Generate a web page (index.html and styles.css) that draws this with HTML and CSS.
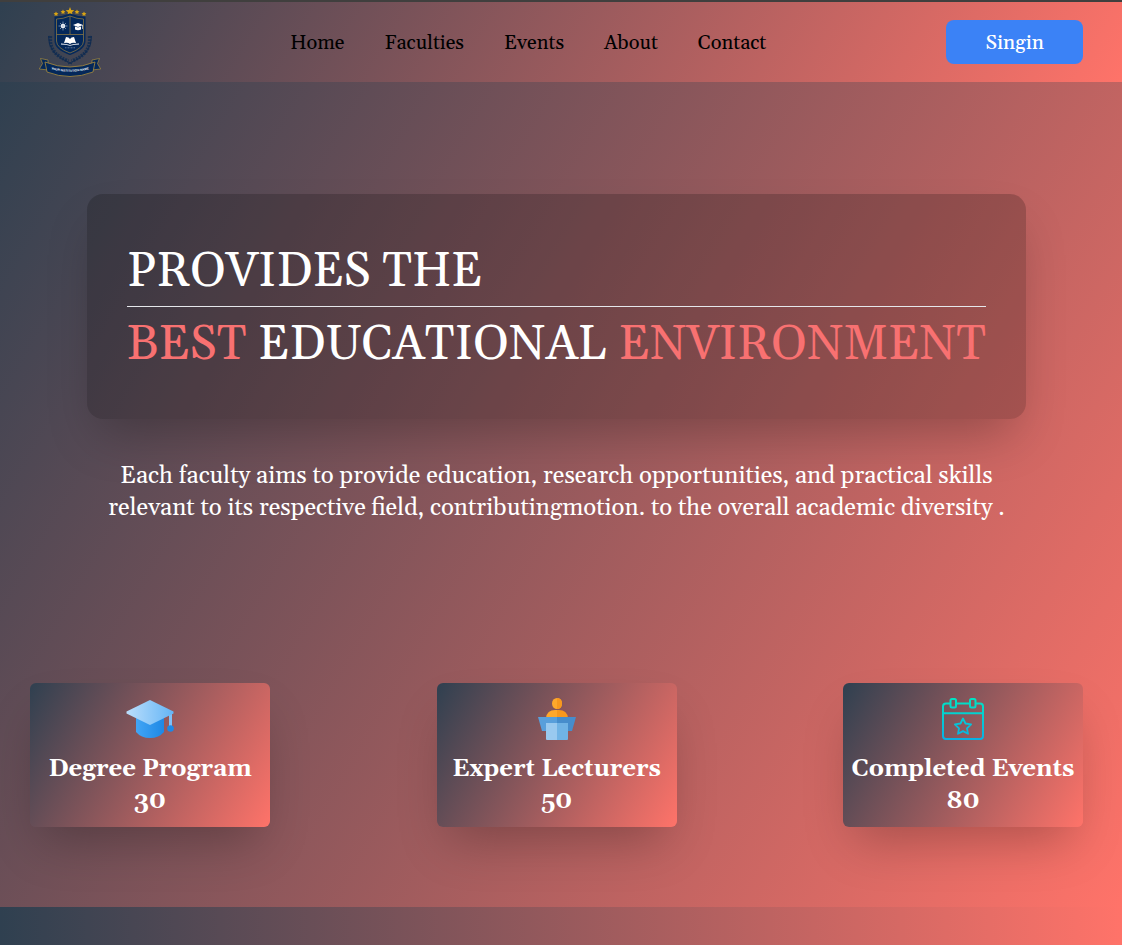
FILE: index.html
```html
<!DOCTYPE html>
<html lang="en">
<head>
<meta charset="utf-8">
<meta name="viewport" content="width=device-width, initial-scale=1">
<title>Best Educational Environment</title>
<link rel="stylesheet" href="styles.css">
</head>
<body>
<header class="site-header">
  <a class="logo" href="#" aria-label="Institution home">
    <svg viewBox="0 0 70 75" width="70" height="75" aria-hidden="true">
      <g fill="#d9a514">
        <path d="M35 2l1.200 2.900 3.100.3-2.300 2.100.6 3-2.600-1.500-2.600 1.500.6-3-2.300-2.100 3.100-.3z"/>
        <path d="M28 4.500l.8 1.500 1.600.2-1.200 1.200.3 1.600-1.500-.8-1.500.8.3-1.600-1.200-1.200 1.600-.2z"/>
        <path d="M42 4.500l.8 1.500 1.600.2-1.200 1.200.3 1.600-1.500-.8-1.500.8.3-1.600-1.200-1.200 1.600-.2z"/>
        <path d="M21 6.500l.8 1.500 1.600.2-1.200 1.200.3 1.600-1.500-.8-1.500.8.3-1.600-1.200-1.200 1.600-.2z"/>
        <path d="M49 6.500l.8 1.500 1.600.2-1.200 1.200.3 1.600-1.500-.8-1.500.8.3-1.600-1.200-1.200 1.600-.2z"/>
      </g>
      <path d="M15.500 31q-2 18 18 25M54.500 31q2 18-18 25" fill="none" stroke="#173052" stroke-width="3.500" stroke-dasharray="2 1"/>
      <path d="M13.500 31q-1 18 23.500 28M56.500 31q1 18-23.500 28" fill="none" stroke="#102b50" stroke-width="1"/>
      <path d="M35 9.500q7 3 14.500 3V36q0 8-14.500 13-14.500-5-14.500-13V12.500q7.500 0 14.500-3z" fill="#04285a" stroke="#04285a" stroke-width="2"/>
      <path d="M35 11q7 3 13.500 3v22q0 7-13.500 12-13.500-5-13.500-12V14q6.500 0 13.500-3zM35 11v18.500M21.500 29.500h27" fill="none" stroke="#857345" stroke-width=".8"/>
      <circle cx="28" cy="21" r="2.200" fill="#fff"/>
      <path d="M28 16.500v9M23.500 21h9M25 18l6 6M31 18l-6 6" stroke="#bdcbdc" stroke-width=".6"/>
      <path d="M38 20l5-2 5 2-5 2zM40 21.500v3q3 1.500 6 0v-3l-3 1zM47.300 20h.6v4h-.6z" fill="#fff"/>
      <path d="M31 32q3 0 4 2 1-2 4-2l2 6q-4-1-6 1-2-2-6-1zM26 38.500q5 0 9 1.500 4-1.500 9-1.500v1q-5 0-9 1.300-4-1.300-9-1.300z" fill="#fff"/>
      <path d="M30 42.800h10" stroke="#8396b2" stroke-width=".7" stroke-dasharray="1 .5"/>
      <path d="M13 55l-7.500-1.500 2 5-3.200 5.500 9 1zM57 55l7.500-1.500-2 5 3.200 5.500-9 1z" fill="#04285a" stroke="#a98c3c" stroke-width=".7"/>
      <path d="M10 57q25 10 50 0l-2 10q-23 9-46 0z" fill="#04285a" stroke="#a98c3c" stroke-width=".8"/>
      <path id="motto" d="M11 62.700q24 8 48 0" fill="none"/>
      <text class="motto"><textPath href="#motto" startOffset="50%" text-anchor="middle">YOUR INSTITUTION NAME</textPath></text>
    </svg>
  </a>
  <nav class="nav" aria-label="Main">
    <a href="#">Home</a><a href="#">Faculties</a><a href="#">Events</a><a href="#">About</a><a href="#">Contact</a>
  </nav>
  <button class="signin" type="button">Singin</button>
</header>
<main class="hero">
  <section class="intro">
    <h1 class="title">
      <span class="title-top">PROVIDES THE</span>
      <span class="title-bottom"><em>BEST</em> EDUCATIONAL <em>ENVIRONMENT</em></span>
    </h1>
    <p class="lead">Each faculty aims to provide education, research opportunities, and practical skills<br>relevant to its respective field, contributingmotion. to the overall academic diversity .</p>
  </section>
  <section class="stats" aria-label="Statistics">
    <article class="card">
      <svg viewBox="0 0 48 48" width="48" height="48" aria-hidden="true">
        <defs>
          <linearGradient id="cap"><stop stop-color="#bbdefb"/><stop offset="1" stop-color="#64b5f6"/></linearGradient>
          <linearGradient id="base"><stop stop-color="#42a5f5"/><stop offset="1" stop-color="#1e88e5"/></linearGradient>
        </defs>
        <path d="M10 20h28v17q-5 6-14 6t-14-6z" fill="url(#base)"/>
        <path d="M43 18h3v16h-3z" fill="#7fc0f7"/><circle cx="44.500" cy="33.500" r="3.300" fill="#1e88e5"/>
        <path d="M24 5l23.500 11.500v2L24 30 .5 18.500v-2z" fill="url(#cap)"/>
      </svg>
      <h2>Degree Program</h2><p>30</p>
    </article>
    <article class="card">
      <svg viewBox="0 0 48 48" width="48" height="48" aria-hidden="true">
        <ellipse cx="24" cy="8.500" rx="5" ry="5.500" fill="#ffa82b"/><path d="M24 3q5 0 5 5.500T24 14z" fill="#f8981d"/>
        <path d="M13 23q1-8 9-8h2v8z" fill="#ffa82b"/><path d="M24 15h2q8 0 9 8H24z" fill="#f8981d"/>
        <path d="M5 22h19v14H9z" fill="#589fdb"/><path d="M24 22h19l-4 14H24z" fill="#468dcc"/>
        <path d="M13 28h11v17H14q-1 0-1-1z" fill="#99c9ef"/><path d="M24 28h11v16q0 1-1 1H24z" fill="#70b3e5"/>
      </svg>
      <h2>Expert Lecturers</h2><p>50</p>
    </article>
    <article class="card">
      <svg viewBox="0 0 48 48" width="48" height="48" aria-hidden="true">
        <defs><linearGradient id="event" gradientUnits="userSpaceOnUse" x1="24" y1="3" x2="24" y2="45"><stop stop-color="#00e5c3"/><stop offset="1" stop-color="#08b0e6"/></linearGradient></defs>
        <g fill="none" stroke="url(#event)" stroke-width="2" stroke-linejoin="round">
          <path d="M11 8.500H7q-3 0-3 3V41q0 3 3 3h34q3 0 3-3V11.500q0-3-3-3h-4M17 8.500h14M4 18.300h40"/>
          <rect x="11.500" y="4" width="5.500" height="8.500" rx="1.500"/><rect x="31" y="4" width="5.500" height="8.500" rx="1.500"/>
          <path d="M24 23.500l2.500 5 5.600.8-4.100 4 1 5.500-5-2.700-5 2.700 1-5.500-4.100-4 5.600-.8z" stroke-width="1.800"/>
        </g>
      </svg>
      <h2>Completed Events</h2><p>80</p>
    </article>
  </section>
</main>
<section class="next-section" aria-hidden="true"></section>
</body>
</html>
```
FILE: styles.css
```css
* { box-sizing: border-box; }

:root {
  --blend-from: #2f4050;
  --blend-to: #ff7369;
  --blend: linear-gradient(120deg, var(--blend-from), var(--blend-to));
}

body {
  display: flex;
  flex-direction: column;
  min-height: 100vh;
  margin: 0;
  border-top: 2px solid #403f3e;
  color: #fff;
  font-family: Georgia, Gelasio, "Liberation Serif", serif;
}

h1, h2, p { margin: 0; }

.site-header {
  display: flex;
  align-items: center;
  justify-content: space-between;
  height: 80px;
  padding: 0 39px 0 35px;
  background: var(--blend);
}

.logo { display: flex; width: 75px; }
.motto { fill: #fff; font-family: "Liberation Sans", sans-serif; font-size: 4px; font-weight: 700; }
.motto { font-size: 3px; }

.nav { display: flex; gap: 40px; padding-top: 2px; font-size: 20px; }
.nav a { color: #000; text-decoration: none; }

.signin {
  padding: 9px 39px 7px;
  border: 0;
  border-radius: 8px;
  background: #3b82f6;
  color: #fff;
  font: 500 20px/28px Georgia, Gelasio, "Liberation Serif", serif;
}

.hero {
  display: flex;
  flex-direction: column;
  justify-content: space-between;
  padding: 112px 39px 80px 30px;
  min-height: 825px;
  background: var(--blend);
}

.intro {
  display: flex;
  flex-direction: column;
  align-items: center;
  gap: 41px;
}

.title {
  padding: 40px;
  border-radius: 16px;
  background: rgba(0, 0, 0, .2);
  box-shadow: 0 25px 50px -12px rgba(0, 0, 0, .25);
  font-size: 48px;
  font-weight: 400;
  line-height: 68px;
  white-space: nowrap;
}
.title span { display: block; padding-top: 4px; }
.title-top { border-bottom: 1px solid #e5e7eb; }
.title em { color: #f87171; font-style: normal; }

.lead { font-size: 24px; line-height: 32px; text-align: center; }

.stats { display: flex; justify-content: space-between; }

.card {
  display: flex;
  flex-direction: column;
  align-items: center;
  width: 240px;
  padding: 12px 0 10px;
  border-radius: 6px;
  background: var(--blend);
  box-shadow: 0 25px 50px -12px rgba(0, 0, 0, .25);
  font-size: 24px;
  font-weight: 700;
  line-height: 32px;
}
.card svg { margin-bottom: 10px; }
.card h2 { font-size: 24px; line-height: 32px; white-space: nowrap; }

.next-section {
  flex: 1;
  background: linear-gradient(90deg, var(--blend-from), var(--blend-to));
}
```
